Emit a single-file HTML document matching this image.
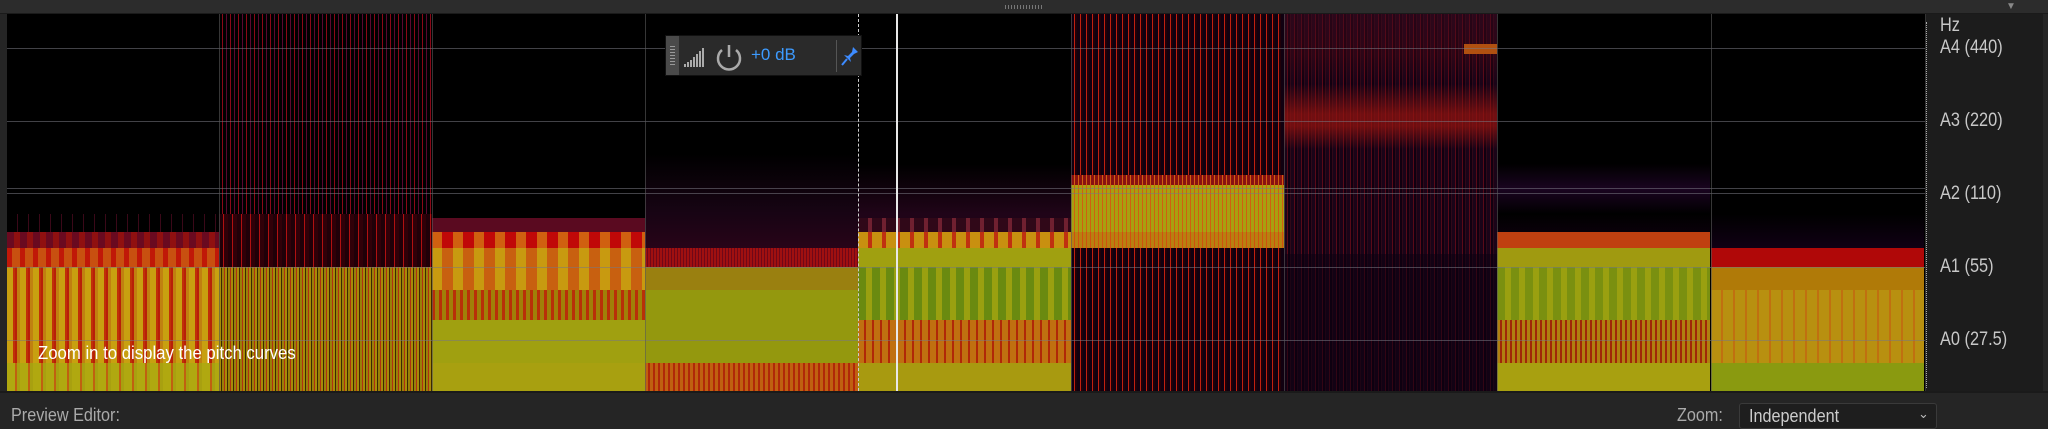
<!DOCTYPE html>
<html><head><style>
*{margin:0;padding:0;box-sizing:border-box}
body{width:2048px;height:422px;background:#252525;position:relative;overflow:hidden;font-family:"Liberation Sans",sans-serif}
.abs{position:absolute}
#spec{left:7px;top:14px;width:1918px;height:377px;background:#000;overflow:hidden}
.seg{position:absolute;top:0;height:377px;width:213px}
.b{position:absolute;left:0;width:100%}
.hl{position:absolute;left:0;width:1918px;height:1px;background:rgba(120,120,130,.55)}
.vl{position:absolute;top:0;width:1px;height:377px;background:rgba(90,90,90,.6)}
.lab{position:absolute;left:1940px;color:#c8c8c8;font-size:19px;transform:scaleX(.86);transform-origin:left}
</style></head><body>
<div class="abs" style="left:0;top:0;width:2048px;height:14px;background:#2c2c2c;border-bottom:1px solid #1a1a1a"></div>
<div class="abs" style="left:1005px;top:5px;width:38px;height:4px;background:repeating-linear-gradient(90deg,#777 0 1px,transparent 1px 3px)"></div>
<div class="abs" style="left:2006px;top:1px;color:#888;font-size:10px">▼</div>
<div class="abs" style="left:1925px;top:14px;width:118px;height:377px;background:#1c1c1c"></div>
<div class="abs" style="left:1926px;top:22px;width:1px;height:366px;border-left:1px dotted #aaa"></div>
<div id="spec" class="abs">
 <!-- seg1 -->
 <div class="seg" style="left:0">
  <div class="b" style="top:200px;height:18px;background:repeating-linear-gradient(90deg,#000 0 10px,#3a0818 10px 11px)"></div>
  <div class="b" style="top:218px;height:16px;background:repeating-linear-gradient(90deg,#6a0a20 0 7px,#901010 7px 13px)"></div>
  <div class="b" style="top:234px;height:19px;background:repeating-linear-gradient(90deg,#c01808 0 5px,#c85010 5px 13px)"></div>
  <div class="b" style="top:253px;height:96px;background:repeating-linear-gradient(90deg,#c8a010 0 6px,#c03008 6px 8px,#b82008 8px 10px,#c08010 10px 13px)"></div>
  <div class="b" style="top:349px;height:28px;background:repeating-linear-gradient(90deg,#b0a810 0 8px,#c06010 8px 10px,#a8a010 10px 13px)"></div>
 </div>
 <!-- seg2 -->
 <div class="seg" style="left:212px;background:repeating-linear-gradient(90deg,#000 0 3px,#8a0818 3px 4px,#000 4px 7px,#5a0830 7px 8px)">
  <div class="b" style="top:200px;height:53px;background:repeating-linear-gradient(90deg,#200008 0 4px,#b01010 4px 5px,#300008 5px 9px)"></div>
  <div class="b" style="top:253px;height:124px;background:repeating-linear-gradient(90deg,#a88a08 0 2px,#3a2a02 2px 3px,#9a8008 3px 5px,#b03010 5px 6px)"></div>
 </div>
 <!-- seg3 -->
 <div class="seg" style="left:425px">
  <div class="b" style="top:204px;height:14px;background:#5a0a20"></div>
  <div class="b" style="top:218px;height:16px;background:repeating-linear-gradient(90deg,#d06010 0 10px,#c00808 10px 21px)"></div>
  <div class="b" style="top:234px;height:42px;background:repeating-linear-gradient(90deg,#c89a10 0 10px,#c86010 10px 21px)"></div>
  <div class="b" style="top:276px;height:30px;background:repeating-linear-gradient(90deg,#b83008 0 3px,#a08008 3px 7px)"></div>
  <div class="b" style="top:306px;height:43px;background:#a0a010"></div>
  <div class="b" style="top:349px;height:28px;background:#a8a010"></div>
 </div>
 <!-- seg4 -->
 <div class="seg" style="left:638px;background:linear-gradient(#000 0,#000 140px,#180414 200px,#280418 234px)">
  <div class="b" style="top:234px;height:19px;background:repeating-linear-gradient(90deg,#a01010 0 2px,#700818 2px 3px)"></div>
  <div class="b" style="top:253px;height:23px;background:#9a8010"></div>
  <div class="b" style="top:276px;height:73px;background:#94980e"></div>
  <div class="b" style="top:349px;height:28px;background:repeating-linear-gradient(90deg,#c06010 0 3px,#b02808 3px 5px)"></div>
 </div>
 <!-- seg5 -->
 <div class="seg" style="left:851px;background:linear-gradient(#000 0,#000 150px,#200418 200px)">
  <div class="b" style="top:204px;height:14px;background:repeating-linear-gradient(90deg,#300818 0 10px,#702030 10px 14px)"></div>
  <div class="b" style="top:218px;height:16px;background:repeating-linear-gradient(90deg,#c89010 0 10px,#c03010 10px 14px)"></div>
  <div class="b" style="top:234px;height:19px;background:#a0a010"></div>
  <div class="b" style="top:253px;height:53px;background:repeating-linear-gradient(90deg,#6a8a10 0 8px,#9aa010 8px 14px)"></div>
  <div class="b" style="top:306px;height:43px;background:repeating-linear-gradient(90deg,#c07010 0 6px,#b02808 6px 8px)"></div>
  <div class="b" style="top:349px;height:28px;background:#a89a10"></div>
 </div>
 <!-- seg6 -->
 <div class="seg" style="left:1064px;background:repeating-linear-gradient(90deg,#100010 0 3px,#c02010 3px 4px,#200008 4px 6px)">
  <div class="b" style="top:161px;height:10px;background:repeating-linear-gradient(90deg,#8a1010 0 3px,#d06010 3px 4px)"></div>
  <div class="b" style="top:171px;height:47px;background:repeating-linear-gradient(90deg,#a8a010 0 3px,#d06010 3px 4px)"></div>
  <div class="b" style="top:218px;height:16px;background:repeating-linear-gradient(90deg,#b88010 0 3px,#d05010 3px 4px)"></div>
 </div>
 <!-- seg7 -->
 <div class="seg" style="left:1277px;background:repeating-linear-gradient(90deg,#1a0418 0 3px,#5a0a18 3px 4px,#100010 4px 6px,#300818 6px 7px)">
  <div class="b" style="top:0;height:240px;background:linear-gradient(rgba(60,10,30,.5) 0,rgba(90,10,20,.3) 40px,rgba(0,0,0,0) 70px,rgba(150,20,15,.7) 100px,rgba(150,20,15,.7) 112px,rgba(0,0,0,0) 135px)"></div>
  <div class="b" style="top:240px;height:137px;background:rgba(10,0,15,.5)"></div>
  <div class="b" style="top:30px;height:10px;left:180px;width:33px;background:#b05010"></div>
 </div>
 <!-- seg8 -->
 <div class="seg" style="left:1490px;background:linear-gradient(#000 0,#000 150px,#1a0420 175px,#000 200px,#100010 232px)">
  <div class="b" style="top:218px;height:16px;background:#c04010"></div>
  <div class="b" style="top:234px;height:19px;background:#a09a10"></div>
  <div class="b" style="top:253px;height:53px;background:repeating-linear-gradient(90deg,#7a9010 0 8px,#9aa010 8px 14px)"></div>
  <div class="b" style="top:306px;height:43px;background:repeating-linear-gradient(90deg,#b08010 0 3px,#a02808 3px 5px)"></div>
  <div class="b" style="top:349px;height:28px;background:#a8a010"></div>
 </div>
 <!-- seg9 -->
 <div class="seg" style="left:1704px;background:linear-gradient(#000 0,#000 200px,#100014 234px)">
  <div class="b" style="top:234px;height:19px;background:#b00808"></div>
  <div class="b" style="top:253px;height:23px;background:#b07a08"></div>
  <div class="b" style="top:276px;height:73px;background:repeating-linear-gradient(90deg,#b89010 0 10px,#c07010 10px 12px)"></div>
  <div class="b" style="top:349px;height:28px;background:#8a9a10"></div>
 </div>
 <div class="hl" style="top:34px"></div>
 <div class="hl" style="top:107px"></div>
 <div class="hl" style="top:174px"></div>
 <div class="hl" style="top:179px"></div>
 <div class="hl" style="top:253px"></div>
 <div class="hl" style="top:326px"></div>
 <div class="vl" style="left:212px"></div><div class="vl" style="left:425px"></div><div class="vl" style="left:638px"></div>
 <div class="vl" style="left:1064px"></div><div class="vl" style="left:1277px"></div><div class="vl" style="left:1490px"></div><div class="vl" style="left:1704px"></div>
 <div class="abs" style="left:851px;top:0;width:1px;height:377px;border-left:1px dashed #ccc"></div>
 <div class="abs" style="left:889px;top:0;width:2px;height:377px;background:#e8e8e8"></div>
 <div class="abs" style="left:31px;top:329px;color:#fff;font-size:18px;transform:scaleX(.93);transform-origin:left">Zoom in to display the pitch curves</div>
</div>
<!-- popup -->
<div class="abs" style="left:665px;top:35px;width:197px;height:41px;background:#2a2a2a;border:1px solid #111">
 <div class="abs" style="left:0;top:0;width:13px;height:39px;background:#4a4a4a"></div>
 <div class="abs" style="left:4px;top:10px;width:5px;height:20px;background:repeating-linear-gradient(#999 0 1px,transparent 1px 3px)"></div>
 <svg class="abs" style="left:17px;top:10px" width="28" height="22"><g fill="#aaa"><rect x="1" y="18" width="2" height="3"/><rect x="4" y="16" width="2" height="5"/><rect x="7" y="14" width="2" height="7"/><rect x="10" y="11" width="2" height="10"/><rect x="13" y="8" width="2" height="13"/><rect x="16" y="5" width="2" height="16"/><rect x="19" y="2" width="2" height="19"/></g></svg>
 <svg class="abs" style="left:48px;top:6px" width="30" height="30"><path d="M8 8 A11 11 0 1 0 22 8" fill="none" stroke="#aaa" stroke-width="2.5"/><line x1="15" y1="3" x2="15" y2="15" stroke="#aaa" stroke-width="2.5"/></svg>
 <div class="abs" style="left:85px;top:9px;color:#3d9bff;font-size:17px">+0 dB</div>
 <div class="abs" style="left:170px;top:4px;width:1px;height:32px;background:#555"></div>
 <svg class="abs" style="left:174px;top:9px" width="20" height="22"><path d="M13 2 L18 7 L14 9 L10 13 L11 17 L4 10 L8 11 L12 7 Z" fill="#3d8bff"/><line x1="7" y1="14" x2="2" y2="20" stroke="#3d8bff" stroke-width="2"/></svg>
</div>
<div class="lab" style="top:15px">Hz</div>
<div class="lab" style="top:37px">A4 (440)</div>
<div class="lab" style="top:110px">A3 (220)</div>
<div class="lab" style="top:183px">A2 (110)</div>
<div class="lab" style="top:256px">A1 (55)</div>
<div class="lab" style="top:329px">A0 (27.5)</div>
<div class="abs" style="left:1925px;top:14px;width:1px;height:377px;background:#333"></div>
<div class="abs" style="left:0;top:391px;width:2048px;height:2px;background:#1a1a1a"></div>
<div class="abs" style="left:11px;top:405px;color:#aaa;font-size:18px;transform:scaleX(.9);transform-origin:left">Preview Editor:</div>
<div class="abs" style="left:1677px;top:405px;color:#aaa;font-size:18px;transform:scaleX(.9);transform-origin:left">Zoom:</div>
<div class="abs" style="left:1739px;top:403px;width:198px;height:26px;background:#1e1e1e;border:1px solid #3a3a3a;border-radius:3px">
 <div class="abs" style="left:9px;top:2px;color:#ccc;font-size:18px;transform:scaleX(.9);transform-origin:left">Independent</div>
 <div class="abs" style="left:178px;top:2px;color:#bbb;font-size:13px">⌄</div>
</div>
</body></html>
